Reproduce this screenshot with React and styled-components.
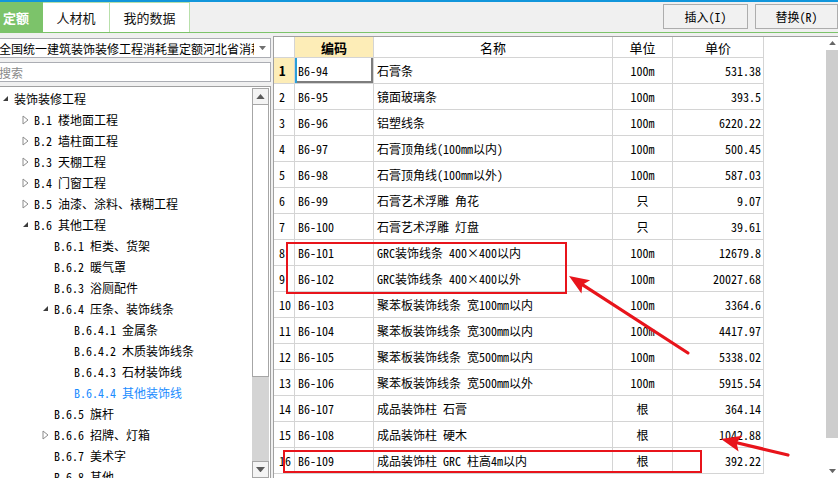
import React from 'react';
import styled, { createGlobalStyle } from 'styled-components';

const MONO = `"Noto Sans Mono CJK SC", "Liberation Mono", "Noto Sans CJK SC", monospace`;

const GlobalStyle = createGlobalStyle`
    html, body {
        margin: 0;
        padding: 0;
        background: #f0f0f0;
    }
    body {
        font-family: ${MONO};
        font-size: 12px;
        color: #000;
    }
`;

const Screen = styled.div`
    position: relative;
    width: 838px;
    height: 478px;
    overflow: hidden;
    box-sizing: border-box;
    border-top: 2px solid #1296db;
    background: #f0f0f0;
    display: flex;
    flex-direction: column;
`;

const TopBar = styled.div`
    height: 31px;
    flex: none;
    display: flex;
    align-items: stretch;
    box-sizing: border-box;
    border-bottom: 1px solid #7cc36a;
`;

const Tabs = styled.div`
    display: flex;
    margin-left: -10px;
`;

const Tab = styled.div`
    width: ${(p) => p.$w}px;
    box-sizing: border-box;
    display: flex;
    align-items: center;
    justify-content: center;
    font-size: 13px;
    font-weight: ${(p) => (p.$active ? 700 : 400)};
    color: ${(p) => (p.$active ? '#fff' : '#111')};
    background: ${(p) => (p.$active ? '#7cc36a' : '#fff')};
    border: 1px solid ${(p) => (p.$active ? '#7cc36a' : '#b8e0ab')};
    border-bottom: none;
    border-left: none;
`;

const Actions = styled.div`
    margin-left: auto;
    display: flex;
    align-items: center;
    gap: 7px;
    padding-bottom: 2px;
`;

const Button = styled.div`
    width: ${(p) => p.$w}px;
    height: 25px;
    box-sizing: border-box;
    border: 1px solid #adadad;
    background: #f1f1f1;
    display: flex;
    align-items: center;
    justify-content: center;
    font-size: 12px;
`;

const Body = styled.div`
    flex: 1;
    min-height: 0;
    display: flex;
`;

const LeftPane = styled.div`
    width: 275px;
    margin-left: -4px;
    flex: none;
    display: flex;
    flex-direction: column;
    gap: 4px;
    padding-top: 5px;
    box-sizing: border-box;
`;

const Field = styled.div`
    height: 20px;
    flex: none;
    box-sizing: border-box;
    border: 1px solid #abadb3;
    background: #fff;
    display: flex;
    align-items: center;
    padding-left: 2px;
    font-size: 12px;
    color: ${(p) => (p.$muted ? '#8a8a8a' : '#000')};
    white-space: nowrap;
    overflow: hidden;
`;

const FieldText = styled.span`
    flex: 1;
    overflow: hidden;
`;

const DropArrow = styled.span`
    width: 16px;
    flex: none;
    display: flex;
    justify-content: center;
`;

const TreeBox = styled.div`
    flex: 1;
    min-height: 0;
    box-sizing: border-box;
    border: 1px solid #a0a0a0;
    border-bottom: none;
    background: #fff;
    display: flex;
`;

const TreeList = styled.div`
    flex: 1;
    padding-top: 1px;
    overflow: hidden;
`;

const TreeRow = styled.div`
    height: 21px;
    display: flex;
    align-items: center;
    padding-left: ${(p) => 5 + p.$level * 20}px;
    white-space: nowrap;
    color: ${(p) => (p.$active ? '#1a8cff' : '#000')};
`;

const Expander = styled.span`
    width: 12px;
    flex: none;
    display: flex;
    align-items: center;
`;

const VScroll = styled.div`
    width: ${(p) => p.$w}px;
    flex: none;
    display: flex;
    flex-direction: column;
    background: ${(p) => p.$bg || '#fff'};
    box-sizing: border-box;
    padding: ${(p) => (p.$inset ? '1px 1px 0 0' : '0')};
`;

const ScrollBtn = styled.div`
    height: ${(p) => p.$h}px;
    flex: none;
    box-sizing: border-box;
    border: ${(p) => (p.$framed ? '1px solid #a6a6a6' : 'none')};
    background: ${(p) => (p.$framed ? '#f4f4f4' : '#fff')};
    display: flex;
    align-items: center;
    justify-content: center;
`;

const Thumb = styled.div`
    height: ${(p) => p.$h}px;
    flex: none;
    box-sizing: border-box;
    margin-top: ${(p) => p.$top || 0}px;
    background: ${(p) => p.$bg};
    border: ${(p) => (p.$framed ? '1px solid #a6a6a6' : 'none')};
    border-top: none;
`;

const Track = styled.div`
    flex: 1;
    background: ${(p) => p.$bg};
`;

const GridPane = styled.div`
    flex: 1;
    margin-left: 2px;
    margin-top: 3px;
    box-sizing: border-box;
    border-top: 1px solid #a0a0a0;
    border-left: 1px solid #a0a0a0;
    background: #fff;
    display: flex;
    min-width: 0;
`;

const Table = styled.div`
    display: grid;
    grid-template-columns: 21px 79px 239px 60px 91px;
    grid-template-rows: 21px;
    grid-auto-rows: 26px;
    align-content: start;
`;

const Filler = styled.div`
    flex: 1;
`;

const Cell = styled.div`
    box-sizing: border-box;
    border-right: 1px solid #d4d4d4;
    border-bottom: 1px solid #d4d4d4;
    display: flex;
    align-items: center;
    justify-content: ${(p) => p.$align || 'flex-start'};
    padding: 0 ${(p) => p.$pad ?? 3}px;
    white-space: nowrap;
    overflow: hidden;
    font-size: ${(p) => (p.$head ? 13 : 12)}px;
    font-weight: ${(p) => (p.$bold ? 700 : 400)};
    background: ${(p) => (p.$hl ? '#fdedb7' : '#fff')};
    box-shadow: ${(p) => (p.$sel ? 'inset 2px 0 0 #2a9fd8, inset -2px -2px 0 #7d7d7d' : 'none')};
`;

const Overlay = styled.svg`
    position: absolute;
    top: -2px;
    left: 0;
    pointer-events: none;
`;

const Tri = ({ dir = 'up', color = '#606060', size = 7 }) => {
    const pts = dir === 'up' ? `0,${size * 0.6} ${size},${size * 0.6} ${size / 2},0` : `0,0 ${size},0 ${size / 2},${size * 0.6}`;
    return (
        <svg width={size} height={size * 0.6} viewBox={`0 0 ${size} ${size * 0.6}`}>
            <polygon points={pts} fill={color} />
        </svg>
    );
};

const OpenIcon = () => (
    <svg width="7" height="7" viewBox="0 0 7 7">
        <polygon points="6,1 6,6 1,6" fill="#3c3c3c" />
    </svg>
);

const ClosedIcon = () => (
    <svg width="7" height="10" viewBox="0 0 7 10">
        <polygon points="1,1 6,5 1,9" fill="#fff" stroke="#8c8c8c" strokeWidth="1" />
    </svg>
);

const tree = [
    { level: 0, exp: 'open', text: '装饰装修工程' },
    { level: 1, exp: 'closed', text: 'B.1 楼地面工程' },
    { level: 1, exp: 'closed', text: 'B.2 墙柱面工程' },
    { level: 1, exp: 'closed', text: 'B.3 天棚工程' },
    { level: 1, exp: 'closed', text: 'B.4 门窗工程' },
    { level: 1, exp: 'closed', text: 'B.5 油漆、涂料、裱糊工程' },
    { level: 1, exp: 'open', text: 'B.6 其他工程' },
    { level: 2, text: 'B.6.1 柜类、货架' },
    { level: 2, text: 'B.6.2 暖气罩' },
    { level: 2, text: 'B.6.3 浴厕配件' },
    { level: 2, exp: 'open', text: 'B.6.4 压条、装饰线条' },
    { level: 3, text: 'B.6.4.1 金属条' },
    { level: 3, text: 'B.6.4.2 木质装饰线条' },
    { level: 3, text: 'B.6.4.3 石材装饰线' },
    { level: 3, text: 'B.6.4.4 其他装饰线', active: true },
    { level: 2, text: 'B.6.5 旗杆' },
    { level: 2, exp: 'closed', text: 'B.6.6 招牌、灯箱' },
    { level: 2, text: 'B.6.7 美术字' },
    { level: 2, text: 'B.6.8 其他' },
];

const rows = [
    ['B6-94', '石膏条', '100m', '531.38'],
    ['B6-95', '镜面玻璃条', '100m', '393.5'],
    ['B6-96', '铝塑线条', '100m', '6220.22'],
    ['B6-97', '石膏顶角线(100mm以内)', '100m', '500.45'],
    ['B6-98', '石膏顶角线(100mm以外)', '100m', '587.03'],
    ['B6-99', '石膏艺术浮雕 角花', '只', '9.07'],
    ['B6-100', '石膏艺术浮雕 灯盘', '只', '39.61'],
    ['B6-101', 'GRC装饰线条 400×400以内', '100m', '12679.8'],
    ['B6-102', 'GRC装饰线条 400×400以外', '100m', '20027.68'],
    ['B6-103', '聚苯板装饰线条 宽100mm以内', '100m', '3364.6'],
    ['B6-104', '聚苯板装饰线条 宽300mm以内', '100m', '4417.97'],
    ['B6-105', '聚苯板装饰线条 宽500mm以内', '100m', '5338.02'],
    ['B6-106', '聚苯板装饰线条 宽500mm以外', '100m', '5915.54'],
    ['B6-107', '成品装饰柱 石膏', '根', '364.14'],
    ['B6-108', '成品装饰柱 硬木', '根', '1042.88'],
    ['B6-109', '成品装饰柱 GRC 柱高4m以内', '根', '392.22'],
];

// red arrow: tail (x1,y1) -> tip (x2,y2)
const Arrow = ({ x1, y1, x2, y2 }) => {
    const dx = x2 - x1;
    const dy = y2 - y1;
    const len = Math.hypot(dx, dy);
    const ux = dx / len;
    const uy = dy / len;
    const hl = 20;
    const hw = 8;
    const bx = x2 - ux * hl;
    const by = y2 - uy * hl;
    const pts = `${x2},${y2} ${bx - uy * hw},${by + ux * hw} ${bx + ux * 4},${by + uy * 4} ${bx + uy * hw},${by - ux * hw}`;
    return (
        <g>
            <line x1={x1} y1={y1} x2={bx + ux * 6} y2={by + uy * 6} stroke="#e8141b" strokeWidth="3.2" strokeLinecap="round" />
            <polygon points={pts} fill="#e8141b" />
        </g>
    );
};

const App = () => {
    return (
        <>
            <GlobalStyle />
            <Screen>
                <TopBar>
                    <Tabs>
                        <Tab $w={53} $active>定额</Tab>
                        <Tab $w={67}>人材机</Tab>
                        <Tab $w={80}>我的数据</Tab>
                    </Tabs>
                    <Actions>
                        <Button $w={85}>插入(I)</Button>
                        <Button $w={83}>替换(R)</Button>
                    </Actions>
                </TopBar>

                <Body>
                    <LeftPane>
                        <Field>
                            <FieldText>全国统一建筑装饰装修工程消耗量定额河北省消耗量定额</FieldText>
                            <DropArrow><Tri dir="down" color="#707070" size={7} /></DropArrow>
                        </Field>
                        <Field $muted>搜索</Field>
                        <TreeBox>
                            <TreeList>
                                {tree.map((t) => (
                                    <TreeRow key={t.text} $level={t.level} $active={t.active}>
                                        <Expander>
                                            {t.exp === 'open' && <OpenIcon />}
                                            {t.exp === 'closed' && <ClosedIcon />}
                                        </Expander>
                                        {t.text}
                                    </TreeRow>
                                ))}
                            </TreeList>
                            <VScroll $w={18} $inset>
                                <ScrollBtn $h={17} $framed><Tri dir="up" color="#5a5a5a" size={9} /></ScrollBtn>
                                <Thumb $h={272} $bg="#fff" $framed />
                                <Track $bg="#d4d4d4" />
                                <ScrollBtn $h={17} $framed><Tri dir="down" color="#5a5a5a" size={9} /></ScrollBtn>
                            </VScroll>
                        </TreeBox>
                    </LeftPane>

                    <GridPane>
                        <Table>
                            <Cell />
                            <Cell $head $bold $hl $align="center">编码</Cell>
                            <Cell $head $align="center">名称</Cell>
                            <Cell $head $align="center">单位</Cell>
                            <Cell $head $align="center">单价</Cell>
                            {rows.map((r, i) => (
                                <React.Fragment key={r[0]}>
                                    <Cell $pad={5} $hl={i === 0} $bold={i === 0} $head={i === 0}>{i + 1}</Cell>
                                    <Cell $sel={i === 0}>{r[0]}</Cell>
                                    <Cell>{r[1]}</Cell>
                                    <Cell $align="center">{r[2]}</Cell>
                                    <Cell $align="flex-end" $pad={2}>{r[3]}</Cell>
                                </React.Fragment>
                            ))}
                        </Table>
                        <Filler />
                        <VScroll $w={12}>
                            <ScrollBtn $h={12}><Tri dir="up" color="#666" size={7} /></ScrollBtn>
                            <Thumb $h={388} $top={1} $bg="#cdcdcd" />
                            <Track $bg="#fff" />
                            <ScrollBtn $h={14}><Tri dir="down" color="#666" size={7} /></ScrollBtn>
                        </VScroll>
                    </GridPane>
                </Body>

                <Overlay width="838" height="478" viewBox="0 0 838 478">
                    <rect x="287" y="243" width="279" height="50" fill="none" stroke="#e8141b" strokeWidth="2" />
                    <rect x="284" y="451" width="417" height="21" fill="none" stroke="#e8141b" strokeWidth="2" />
                    <Arrow x1={688} y1={353} x2={569} y2={276} />
                    <Arrow x1={788} y1={455} x2={721} y2={439} />
                </Overlay>
            </Screen>
        </>
    );
};

export default App;
